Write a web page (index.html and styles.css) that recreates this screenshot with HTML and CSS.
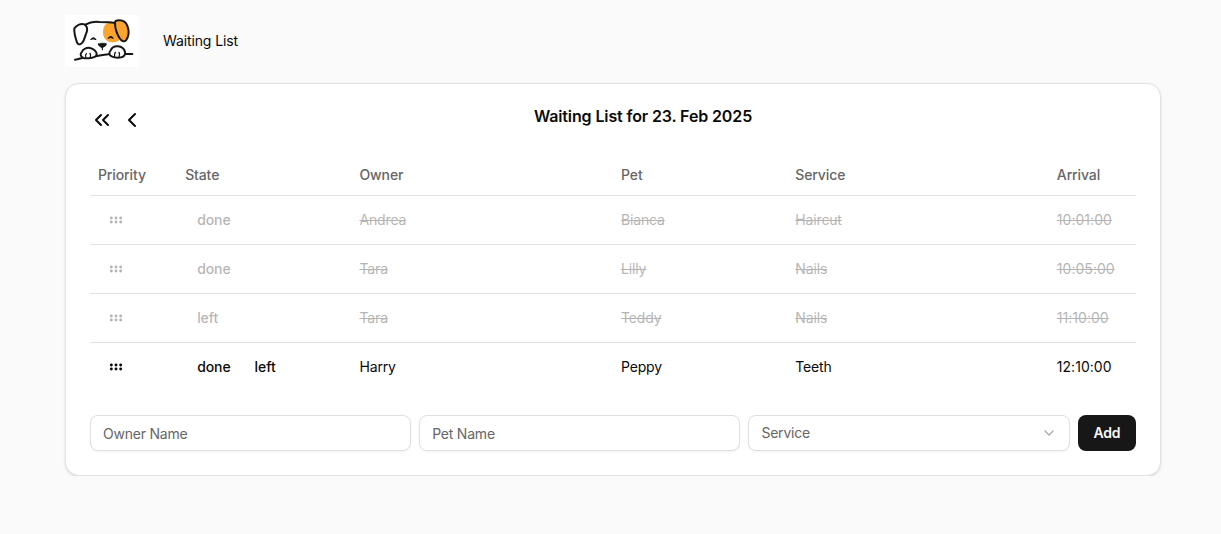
FILE: index.html
```html
<!DOCTYPE html>
<html lang="en">
<head>
<meta charset="utf-8">
<title>Waiting List</title>
<link rel="stylesheet" href="styles.css">
</head>
<body>
<div class="page">
  <header class="header">
    <svg class="logo" viewBox="15 15 222 156" fill="none" stroke="#171717" stroke-width="6" stroke-linecap="round" stroke-linejoin="round">
      <path d="M138 42C146 37 158 38 166 41C168 58 175 74 183 84C179 93 166 98 153 97C137 94 129 82 129 66C129 56 132 47 138 42Z" fill="#fba530" stroke="none"/>
      <path d="M76 44C92 35 106 34 118 36C138 36 150 36 164 39"/>
      <path d="M80 67C83 56 80 47 73 43C63 39 50 45 43 55C42 66 46 83 51 97C54 105 61 105 67 98C75 88 75 76 80 67Z"/>
      <path d="M165 38C165 54 170 70 178 83C184 93 192 97 198 91C206 80 208 65 203 50C199 37 190 31 178 31C170 31 165 34 165 38Z" fill="#fba530"/>
      <path d="M93 88C96 82 105 82 108 89C103 87 98 86 93 88ZM145 84C148 78 157 78 160 85C155 83 150 82 145 84Z" stroke-width="3" fill="#171717"/>
      <path d="M115 102C120 99 132 99 139 101C141 106 132 111 127 113C122 112 114 107 115 102Z" fill="#171717" stroke-width="2"/>
      <path d="M127 112V119" stroke-width="3.5"/>
      <path d="M45 149C61 147 66 141 92 140C119 138 130 133 152 132H217"/>
      <path d="M70 144C60 140 60 130 66 125C69 117 80 112 90 114C100 116 110 124 110 133C110 140 103 142 96 143C86 145 78 146 70 144Z" fill="#fff"/>
      <path d="M155 139C147 135 146 127 152 121C156 112 164 108 174 109C185 110 193 118 195 126C197 134 192 140 184 142C174 144 163 143 155 139Z" fill="#fff"/>
      <path d="M77 142C75 137 77 134 79 131M91 142C93 137 92 134 90 130M164 139C162 134 164 130 166 127M177 140C180 134 179 130 177 127" stroke-width="4"/>
    </svg>
    <a class="nav-link">Waiting List</a>
  </header>
  <main class="card">
    <div class="card-head">
      <div class="pager">
        <svg class="chevron" viewBox="0 0 24 24"><path d="m11 17-5-5 5-5M18 17l-5-5 5-5"/></svg>
        <svg class="chevron" viewBox="0 0 24 24"><path d="m15 18-6-6 6-6"/></svg>
      </div>
      <h1 class="title">Waiting List for 23. Feb 2025</h1>
    </div>
    <div class="table">
      <div class="row head"><span>Priority</span><span>State</span><span>Owner</span><span>Pet</span><span>Service</span><span>Arrival</span></div>
      <div class="row closed"><svg class="grip" viewBox="0 0 24 24"><use href="#dots"/></svg><div class="states"><b>done</b></div><span>Andrea</span><span>Bianca</span><span>Haircut</span><span class="time">10:01:00</span></div>
      <div class="row closed"><svg class="grip" viewBox="0 0 24 24"><use href="#dots"/></svg><div class="states"><b>done</b></div><span>Tara</span><span>Lilly</span><span>Nails</span><span class="time">10:05:00</span></div>
      <div class="row closed"><svg class="grip" viewBox="0 0 24 24"><use href="#dots"/></svg><div class="states"><b>left</b></div><span>Tara</span><span>Teddy</span><span>Nails</span><span class="time">11:10:00</span></div>
      <div class="row"><svg class="grip" viewBox="0 0 24 24"><g id="dots"><circle cx="12" cy="9" r="1"/><circle cx="19" cy="9" r="1"/><circle cx="5" cy="9" r="1"/><circle cx="12" cy="15" r="1"/><circle cx="19" cy="15" r="1"/><circle cx="5" cy="15" r="1"/></g></svg><div class="states"><b>done</b><b>left</b></div><span>Harry</span><span>Peppy</span><span>Teeth</span><span class="time">12:10:00</span></div>
    </div>
    <form class="form">
      <input class="field" placeholder="Owner Name">
      <input class="field" placeholder="Pet Name">
      <div class="field select"><span>Service</span><svg class="caret" viewBox="0 0 24 24"><path d="m6 9 6 6 6-6"/></svg></div>
      <button class="add" type="button">Add</button>
    </form>
  </main>
</div>
</body>
</html>
```

FILE: styles.css
```css
* { box-sizing: border-box; }
body {
  margin: 0;
  background: #fafafa;
  color: #0a0a0a;
  font: 14px/20px Inter, sans-serif;
  letter-spacing: -.16px;
}
.page { padding: 15px 60px 0 65px; }
.header { display: flex; align-items: center; gap: 24px; height: 52px; }
.nav-link { letter-spacing: -.12px; }
.logo { width: 74px; height: 52px; background: #fff; }
.card {
  height: 393px;
  margin-top: 16px;
  padding: 16px 24px 24px;
  background: #fff;
  border: 1px solid #e2e2e2;
  border-radius: 14px;
  box-shadow: 0 1px 3px rgba(0,0,0,.1), 0 1px 2px -1px rgba(0,0,0,.1);
}
.card-head { display: flex; height: 55px; }
.pager { display: flex; gap: 6px; width: 60px; padding-top: 8px; }
.chevron {
  width: 24px;
  height: 24px;
  fill: none;
  stroke: #0a0a0a;
  stroke-width: 2;
  stroke-linecap: round;
  stroke-linejoin: round;
}
.title {
  flex: 1;
  margin: 4px 0 0;
  text-align: center;
  font-size: 16px;
  line-height: 24px;
  font-weight: 600;
  letter-spacing: -.12px;
}
.row {
  display: grid;
  grid-template-columns: 1fr 2fr 3fr 2fr 3fr 1fr;
  align-items: center;
  height: 49px;
  padding-bottom: 1px;
  border-bottom: 1px solid #e2e2e2;
}
.row:last-child { border-bottom-color: transparent; }
.row > span { padding-left: 8px; }
.head { height: 41px; color: #666; font-weight: 500; letter-spacing: -.12px; }
.closed > * { opacity: .3; }
.closed > span { text-decoration: line-through; }
.row > .time { letter-spacing: .03px; }
.grip {
  width: 16px;
  height: 16px;
  margin-left: 18px;
  fill: #0a0a0a;
  stroke: #0a0a0a;
  stroke-width: 2.4;
}
.states { display: flex; gap: 24px; padding-left: 20px; letter-spacing: -.08px; }
.states b { font-weight: 500; }
.form {
  display: grid;
  grid-template-columns: 1fr 1fr 1fr 58.4px;
  gap: 8px;
  margin-top: 23px;
}
.field {
  width: 100%;
  height: 36px;
  padding: 0 12px;
  border: 1px solid #e0e0e0;
  border-radius: 8px;
  background: #fff;
  font: inherit;
  letter-spacing: -.22px;
  box-shadow: 0 1px 2px rgba(0,0,0,.05);
}
.field::placeholder { color: #666; opacity: 1; }
.select {
  display: flex;
  align-items: center;
  justify-content: space-between;
  color: #666;
}
.caret { width: 16px; height: 16px; fill: none; stroke: #aaa; stroke-width: 2; stroke-linecap: round; stroke-linejoin: round; }
.add {
  height: 36px;
  padding: 0;
  border: 0;
  border-radius: 8px;
  background: #171717;
  color: #fafafa;
  font: inherit;
  font-weight: 600;
  letter-spacing: -.3px;
}
```
